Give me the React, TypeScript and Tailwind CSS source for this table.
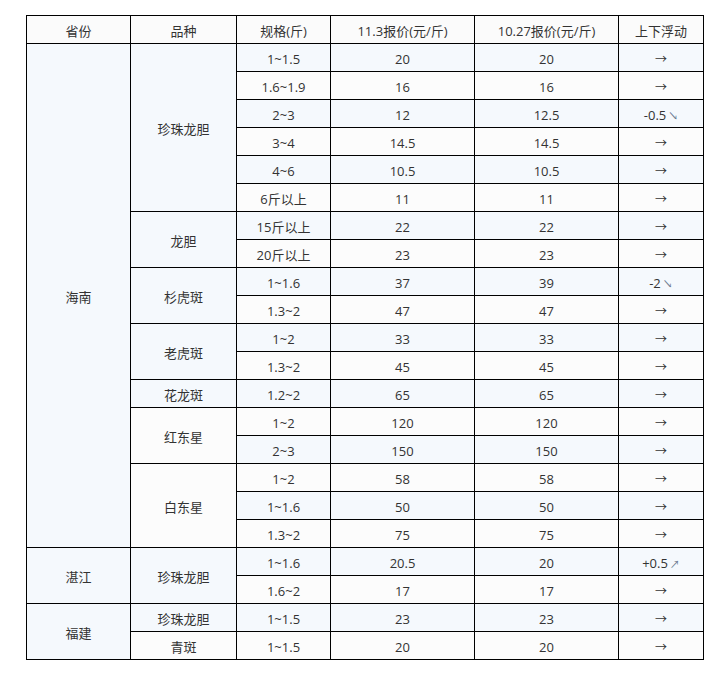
type Row = {
  province?: { name: string; span: number };
  kind?: { name: string; span: number };
  spec: string;
  now: string;
  prev: string;
  diff: string;
};

const rows: Row[] = [
  { province: { name: '海南', span: 18 }, kind: { name: '珍珠龙胆', span: 6 }, spec: '1~1.5', now: '20', prev: '20', diff: '→' },
  { spec: '1.6~1.9', now: '16', prev: '16', diff: '→' },
  { spec: '2~3', now: '12', prev: '12.5', diff: '-0.5↘' },
  { spec: '3~4', now: '14.5', prev: '14.5', diff: '→' },
  { spec: '4~6', now: '10.5', prev: '10.5', diff: '→' },
  { spec: '6斤以上', now: '11', prev: '11', diff: '→' },
  { kind: { name: '龙胆', span: 2 }, spec: '15斤以上', now: '22', prev: '22', diff: '→' },
  { spec: '20斤以上', now: '23', prev: '23', diff: '→' },
  { kind: { name: '杉虎斑', span: 2 }, spec: '1~1.6', now: '37', prev: '39', diff: '-2↘' },
  { spec: '1.3~2', now: '47', prev: '47', diff: '→' },
  { kind: { name: '老虎斑', span: 2 }, spec: '1~2', now: '33', prev: '33', diff: '→' },
  { spec: '1.3~2', now: '45', prev: '45', diff: '→' },
  { kind: { name: '花龙斑', span: 1 }, spec: '1.2~2', now: '65', prev: '65', diff: '→' },
  { kind: { name: '红东星', span: 2 }, spec: '1~2', now: '120', prev: '120', diff: '→' },
  { spec: '2~3', now: '150', prev: '150', diff: '→' },
  { kind: { name: '白东星', span: 3 }, spec: '1~2', now: '58', prev: '58', diff: '→' },
  { spec: '1~1.6', now: '50', prev: '50', diff: '→' },
  { spec: '1.3~2', now: '75', prev: '75', diff: '→' },
  { province: { name: '湛江', span: 2 }, kind: { name: '珍珠龙胆', span: 2 }, spec: '1~1.6', now: '20.5', prev: '20', diff: '+0.5↗' },
  { spec: '1.6~2', now: '17', prev: '17', diff: '→' },
  { province: { name: '福建', span: 2 }, kind: { name: '珍珠龙胆', span: 1 }, spec: '1~1.5', now: '23', prev: '23', diff: '→' },
  { kind: { name: '青斑', span: 1 }, spec: '1~1.5', now: '20', prev: '20', diff: '→' },
];

const cell = 'border border-black h-[28px] p-0 pt-[3px] text-center align-middle font-normal';

function Diff({ value }: { value: string }) {
  if (value === '→') return <span className="text-[12px]">→</span>;
  const arrow = value.slice(-1);
  return (
    <span>
      {value.slice(0, -1)}
      <span className="ml-[2px] text-[10px] text-[#6b7a90]">{arrow}</span>
    </span>
  );
}

export default function App() {
  return (
    <div className="min-h-screen bg-white pl-[26px] pt-[15px]">
      <table
        className="w-[677px] table-fixed border-collapse text-[13px] leading-none text-[#333]"
        style={{ fontFamily: '"Open Sans", "Noto Sans CJK SC", sans-serif' }}
      >
        <colgroup>
          <col className="w-[104px]" />
          <col className="w-[106px]" />
          <col className="w-[94px]" />
          <col className="w-[144px]" />
          <col className="w-[144px]" />
          <col className="w-[85px]" />
        </colgroup>
        <thead>
          <tr className="bg-[#fbfbfb]">
            <th className={cell}>省份</th>
            <th className={cell}>品种</th>
            <th className={cell}>规格(斤)</th>
            <th className={cell}>11.3报价(元/斤)</th>
            <th className={cell}>10.27报价(元/斤)</th>
            <th className={cell}>上下浮动</th>
          </tr>
        </thead>
        <tbody>
          {rows.map((r, i) => (
            <tr key={i} className={i % 2 === 0 ? 'bg-[#f5f9fd]' : 'bg-[#fcfcfc]'}>
              {r.province && (
                <td rowSpan={r.province.span} className={cell}>
                  {r.province.name}
                </td>
              )}
              {r.kind && (
                <td rowSpan={r.kind.span} className={cell}>
                  {r.kind.name}
                </td>
              )}
              <td className={cell}>{r.spec}</td>
              <td className={cell}>{r.now}</td>
              <td className={cell}>{r.prev}</td>
              <td className={cell}>
                <Diff value={r.diff} />
              </td>
            </tr>
          ))}
        </tbody>
      </table>
    </div>
  );
}
